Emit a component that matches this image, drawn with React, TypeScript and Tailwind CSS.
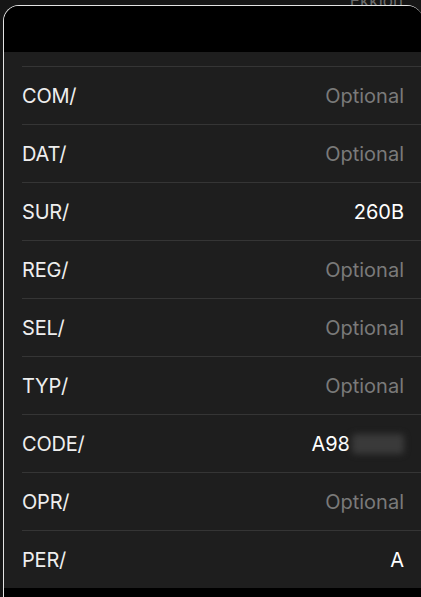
const ROWS: { label: string; value?: string; blurred?: boolean }[] = [
  { label: "COM/" },
  { label: "DAT/" },
  { label: "SUR/", value: "260B" },
  { label: "REG/" },
  { label: "SEL/" },
  { label: "TYP/" },
  { label: "CODE/", value: "A98", blurred: true },
  { label: "OPR/" },
  { label: "PER/", value: "A" },
];

export default function App() {
  return (
    <div
      className="relative w-[421px] h-[597px] overflow-hidden bg-[#161616]"
      style={{ fontFamily: "Inter, 'Liberation Sans', sans-serif" }}
    >
      {/* peek of the screen behind the sheet */}
      <span className="absolute right-[18px] top-[-11px] text-[17px] text-[#6b6b6b]">Ekklon</span>

      <div className="absolute left-[3px] top-[5px] w-[420px] h-[600px] rounded-t-[16px] border-t-[1.5px] border-l-[1.5px] border-[#e4e4e4] bg-black overflow-hidden">
        {/* Header */}
        <div className="h-[46px] bg-black" />

        {/* Fields */}
        <div className="bg-[#1e1e1e] pt-[14px]">
          {ROWS.map((r) => (
            <div key={r.label} className="pl-[18px]">
              <div className="flex h-[58px] items-center justify-between border-t border-[#353535] pr-[19px]">
                <span className="text-[20px] tracking-[-0.2px] text-[#eeeeee]">{r.label}</span>
                {r.value ? (
                  <span className="flex items-center text-[20px] text-white">
                    {r.value}
                    {r.blurred && (
                      <span className="ml-[2px] h-[20px] w-[52px] rounded-sm bg-[#3a3a3a] blur-[3px]" />
                    )}
                  </span>
                ) : (
                  <span className="text-[20px] text-[#7a7a7a]">Optional</span>
                )}
              </div>
            </div>
          ))}
        </div>
      </div>
    </div>
  );
}
